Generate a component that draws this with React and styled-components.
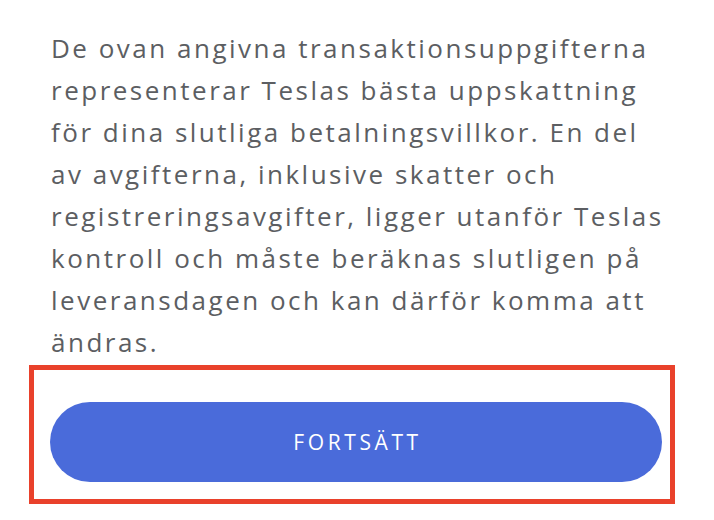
import React from 'react'
import styled, { createGlobalStyle } from 'styled-components'

const GlobalStyle = createGlobalStyle`
  html, body {
    margin: 0;
    padding: 0;
    background: #ffffff;
  }
  body {
    font-family: "Open Sans", "Liberation Sans", sans-serif;
  }
`

const Page = styled.div`
  width: 714px;
  height: 520px;
  box-sizing: border-box;
  padding: 27px 0 0 29px;
  display: flex;
  flex-direction: column;
  overflow: hidden;
`

const Disclaimer = styled.p`
  margin: 0 0 0 22px;
  width: 620px;
  font-size: 26px;
  line-height: 42px;
  letter-spacing: 2.5px;
  color: #5c5e62;
`

const Highlight = styled.div`
  margin-top: 2px;
  width: 646px;
  box-sizing: border-box;
  border: 5px solid #e9412b;
  padding: 32px 8px 17px 16px;
`

const PrimaryButton = styled.button`
  display: flex;
  align-items: center;
  justify-content: center;
  width: 100%;
  height: 80px;
  padding: 0 0 0 3px;
  border: none;
  border-radius: 40px;
  background: #4a6bda;
  color: #ffffff;
  font-family: "Open Sans", "Liberation Sans", sans-serif;
  font-size: 21px;
  letter-spacing: 3.6px;
  cursor: pointer;
`

const App = () => {
  return (
    <>
      <GlobalStyle />
      <Page>
        <Disclaimer>
          De ovan angivna transaktionsuppgifterna representerar Teslas bästa uppskattning
          för dina slutliga betalningsvillkor. En del av avgifterna, inklusive skatter och
          registreringsavgifter, ligger utanför Teslas kontroll och måste beräknas slutligen
          på leveransdagen och kan därför komma att ändras.
        </Disclaimer>
        <Highlight>
          <PrimaryButton>FORTSÄTT</PrimaryButton>
        </Highlight>
      </Page>
    </>
  )
}

export default App
